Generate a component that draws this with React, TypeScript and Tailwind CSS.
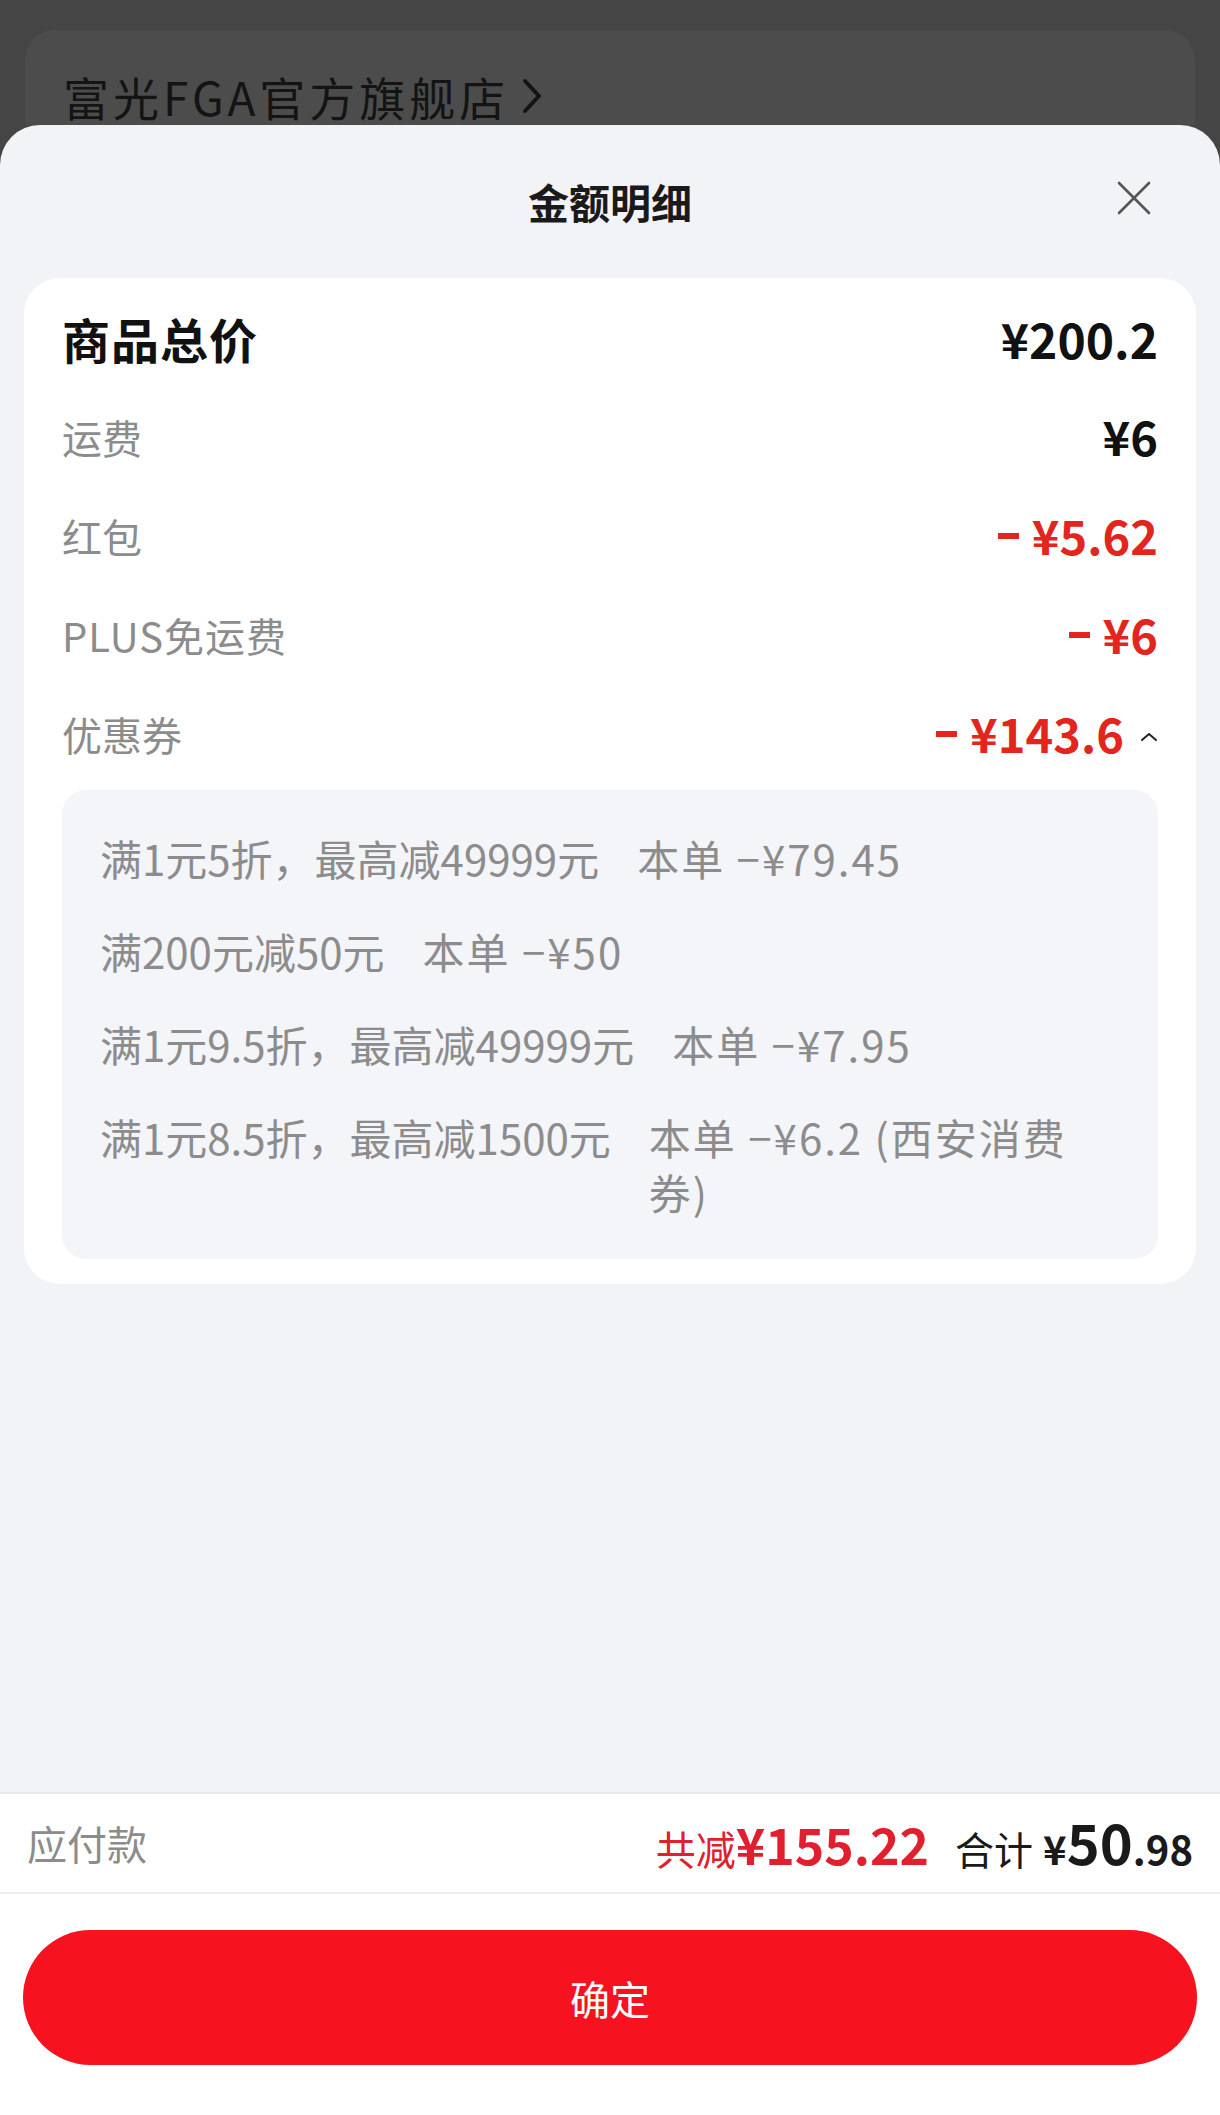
const coupons = [
  { rule: '满1元5折，最高减49999元', cut: '本单 −¥79.45' },
  { rule: '满200元减50元', cut: '本单 −¥50' },
  { rule: '满1元9.5折，最高减49999元', cut: '本单 −¥7.95' },
]

function Minus({ value }: { value: string }) {
  return (
    <span className="flex items-center font-bold text-[#e3261d]">
      <span className="mr-[13px] inline-block h-[6px] w-[21px] bg-[#e3261d]" />
      {value}
    </span>
  )
}

export default function App() {
  return (
    <div className="relative flex h-[2115px] w-[1220px] flex-col overflow-hidden bg-[#454545] font-['Noto_Sans_CJK_SC',sans-serif]">
      {/* shop card behind the sheet */}
      <div className="mx-[25px] mt-[30px] flex h-[95px] items-start rounded-t-[30px] bg-[#4c4c4c] px-[38px] pt-[40px]">
        <span className="flex items-center text-[46px] leading-[52px] tracking-[4px] text-[#141414]">
          富光FGA官方旗舰店
          <svg width="22" height="36" viewBox="0 0 22 36" className="ml-[12px]" fill="none">
            <polyline points="4,3 18,18 4,33" stroke="#141414" strokeWidth="4" strokeLinecap="round" strokeLinejoin="round" />
          </svg>
        </span>
      </div>

      {/* sheet */}
      <div className="flex flex-1 flex-col rounded-t-[40px] bg-[#f2f3f7]">
        <div className="relative flex h-[153px] items-center justify-center">
          <h1 className="text-[41px] font-bold text-[#1a1a1a]">金额明细</h1>
          <svg width="34" height="34" viewBox="0 0 34 34" className="absolute right-[69px] top-[56px]" fill="none">
            <line x1="2" y1="2" x2="32" y2="32" stroke="#555" strokeWidth="2.6" strokeLinecap="round" />
            <line x1="32" y1="2" x2="2" y2="32" stroke="#555" strokeWidth="2.6" strokeLinecap="round" />
          </svg>
        </div>

        <div className="mx-[24px] rounded-[36px] bg-white px-[38px] pt-[10px] pb-[25px]">
          <div className="flex h-[99px] items-center justify-between text-[48px] font-bold text-[#111]">
            <span className="tracking-[1px]">商品总价</span>
            <span>¥200.2</span>
          </div>
          <div className="flex h-[99px] items-center justify-between text-[40px] text-[#8c8c8c]">
            <span>运费</span>
            <span className="text-[47px] font-bold text-[#111]">¥6</span>
          </div>
          <div className="flex h-[99px] items-center justify-between text-[40px] text-[#8c8c8c]">
            <span>红包</span>
            <span className="text-[47px]"><Minus value="¥5.62" /></span>
          </div>
          <div className="flex h-[99px] items-center justify-between text-[40px] text-[#8c8c8c]">
            <span className="tracking-[1px]">PLUS免运费</span>
            <span className="text-[47px]"><Minus value="¥6" /></span>
          </div>
          <div className="flex h-[99px] items-center justify-between text-[40px] text-[#8c8c8c]">
            <span>优惠券</span>
            <span className="flex items-center text-[47px]">
              <Minus value="¥143.6" />
              <svg width="18" height="10" viewBox="0 0 18 10" className="ml-[16px] mt-[6px]" fill="none">
                <polyline points="2,8 9,2 16,8" stroke="#222" strokeWidth="2" strokeLinecap="round" strokeLinejoin="round" />
              </svg>
            </span>
          </div>

          <div className="mt-[7px] flex flex-col gap-[38px] rounded-[24px] bg-[#f4f5f9] px-[38px] py-[40px] text-[42px] leading-[55px] text-[#8c8c8c]">
            {coupons.map((c) => (
              <div key={c.rule} className="flex gap-[38px]">
                <span className="shrink-0">{c.rule}</span>
                <span className="tracking-[2px]">{c.cut}</span>
              </div>
            ))}
            <div className="flex gap-[38px]">
              <span className="shrink-0">满1元8.5折，最高减1500元</span>
              <span className="tracking-[2px]">
                本单 −¥6.2 (西安消费
                <br />
                券)
              </span>
            </div>
          </div>
        </div>

        <div className="flex-1" />

        {/* bottom bar */}
        <div className="flex h-[100px] items-center justify-between border-t-2 border-[#e8e8ea] bg-white px-[27px]">
          <span className="text-[40px] text-[#8c8c8c]">应付款</span>
          <div className="flex items-baseline">
            <span className="text-[40px] text-[#e0202e]">共减</span>
            <span className="text-[50px] font-bold text-[#e0202e]">¥155.22</span>
            <span className="ml-[26px] text-[39px] text-[#1a1a1a]">合计</span>
            <span className="ml-[10px] text-[40px] font-bold text-[#1a1a1a]">¥</span>
            <span className="text-[56px] font-bold leading-none text-[#1a1a1a]">50</span>
            <span className="text-[40px] font-bold text-[#1a1a1a]">.98</span>
          </div>
        </div>
        <div className="border-t-2 border-[#ececee] bg-white px-[23px] pt-[36px] pb-[50px]">
          <button className="flex h-[135px] w-full items-center justify-center rounded-full bg-[#f6121f] text-[40px] text-white">
            确定
          </button>
        </div>
      </div>
    </div>
  )
}
